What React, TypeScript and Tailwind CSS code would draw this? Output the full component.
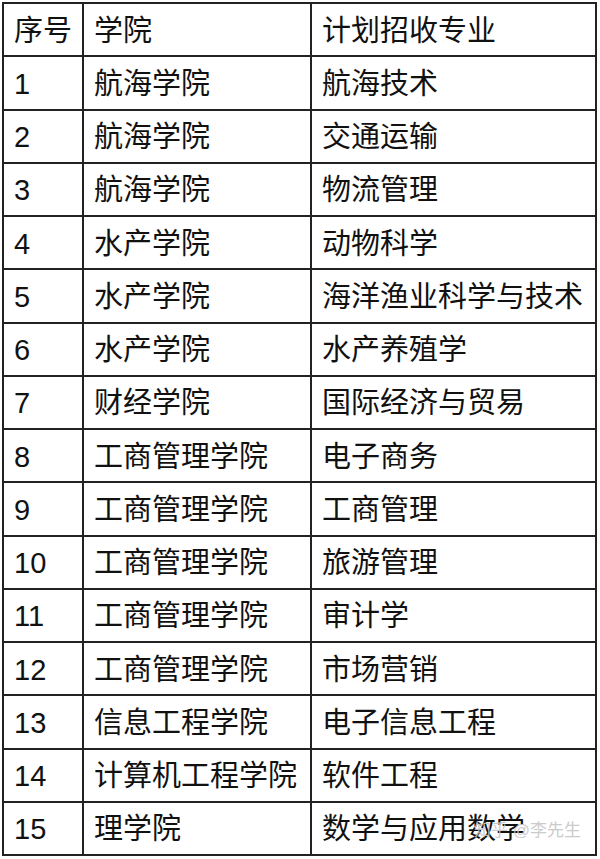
const rows: [string, string, string][] = [
  ["序号", "学院", "计划招收专业"],
  ["1", "航海学院", "航海技术"],
  ["2", "航海学院", "交通运输"],
  ["3", "航海学院", "物流管理"],
  ["4", "水产学院", "动物科学"],
  ["5", "水产学院", "海洋渔业科学与技术"],
  ["6", "水产学院", "水产养殖学"],
  ["7", "财经学院", "国际经济与贸易"],
  ["8", "工商管理学院", "电子商务"],
  ["9", "工商管理学院", "工商管理"],
  ["10", "工商管理学院", "旅游管理"],
  ["11", "工商管理学院", "审计学"],
  ["12", "工商管理学院", "市场营销"],
  ["13", "信息工程学院", "电子信息工程"],
  ["14", "计算机工程学院", "软件工程"],
  ["15", "理学院", "数学与应用数学"],
];

const App = () => {
  return (
    <main className="relative w-[600px] h-[859px] bg-white overflow-hidden font-['Liberation_Sans','Noto_Sans_CJK_SC',sans-serif] text-[#111]">
      <div className="absolute left-[2px] top-[2px] grid grid-cols-[80px_228px_285px] grid-rows-[repeat(16,53.25px)] border-l-2 border-t-2 border-[#222]">
        {rows.map((row, i) =>
          row.map((cell, j) => (
            <div
              key={`${i}-${j}`}
              className="flex items-center pl-[10px] pt-[3px] border-r-2 border-b-2 border-[#222] text-[29px] leading-none whitespace-nowrap overflow-hidden"
            >
              {cell}
            </div>
          ))
        )}
      </div>
      <div className="absolute left-[474px] top-[822px] text-[17px] leading-none text-[#c4c4c4]/90 pointer-events-none whitespace-nowrap">
        知乎 @李先生
      </div>
    </main>
  );
};

export default App;
